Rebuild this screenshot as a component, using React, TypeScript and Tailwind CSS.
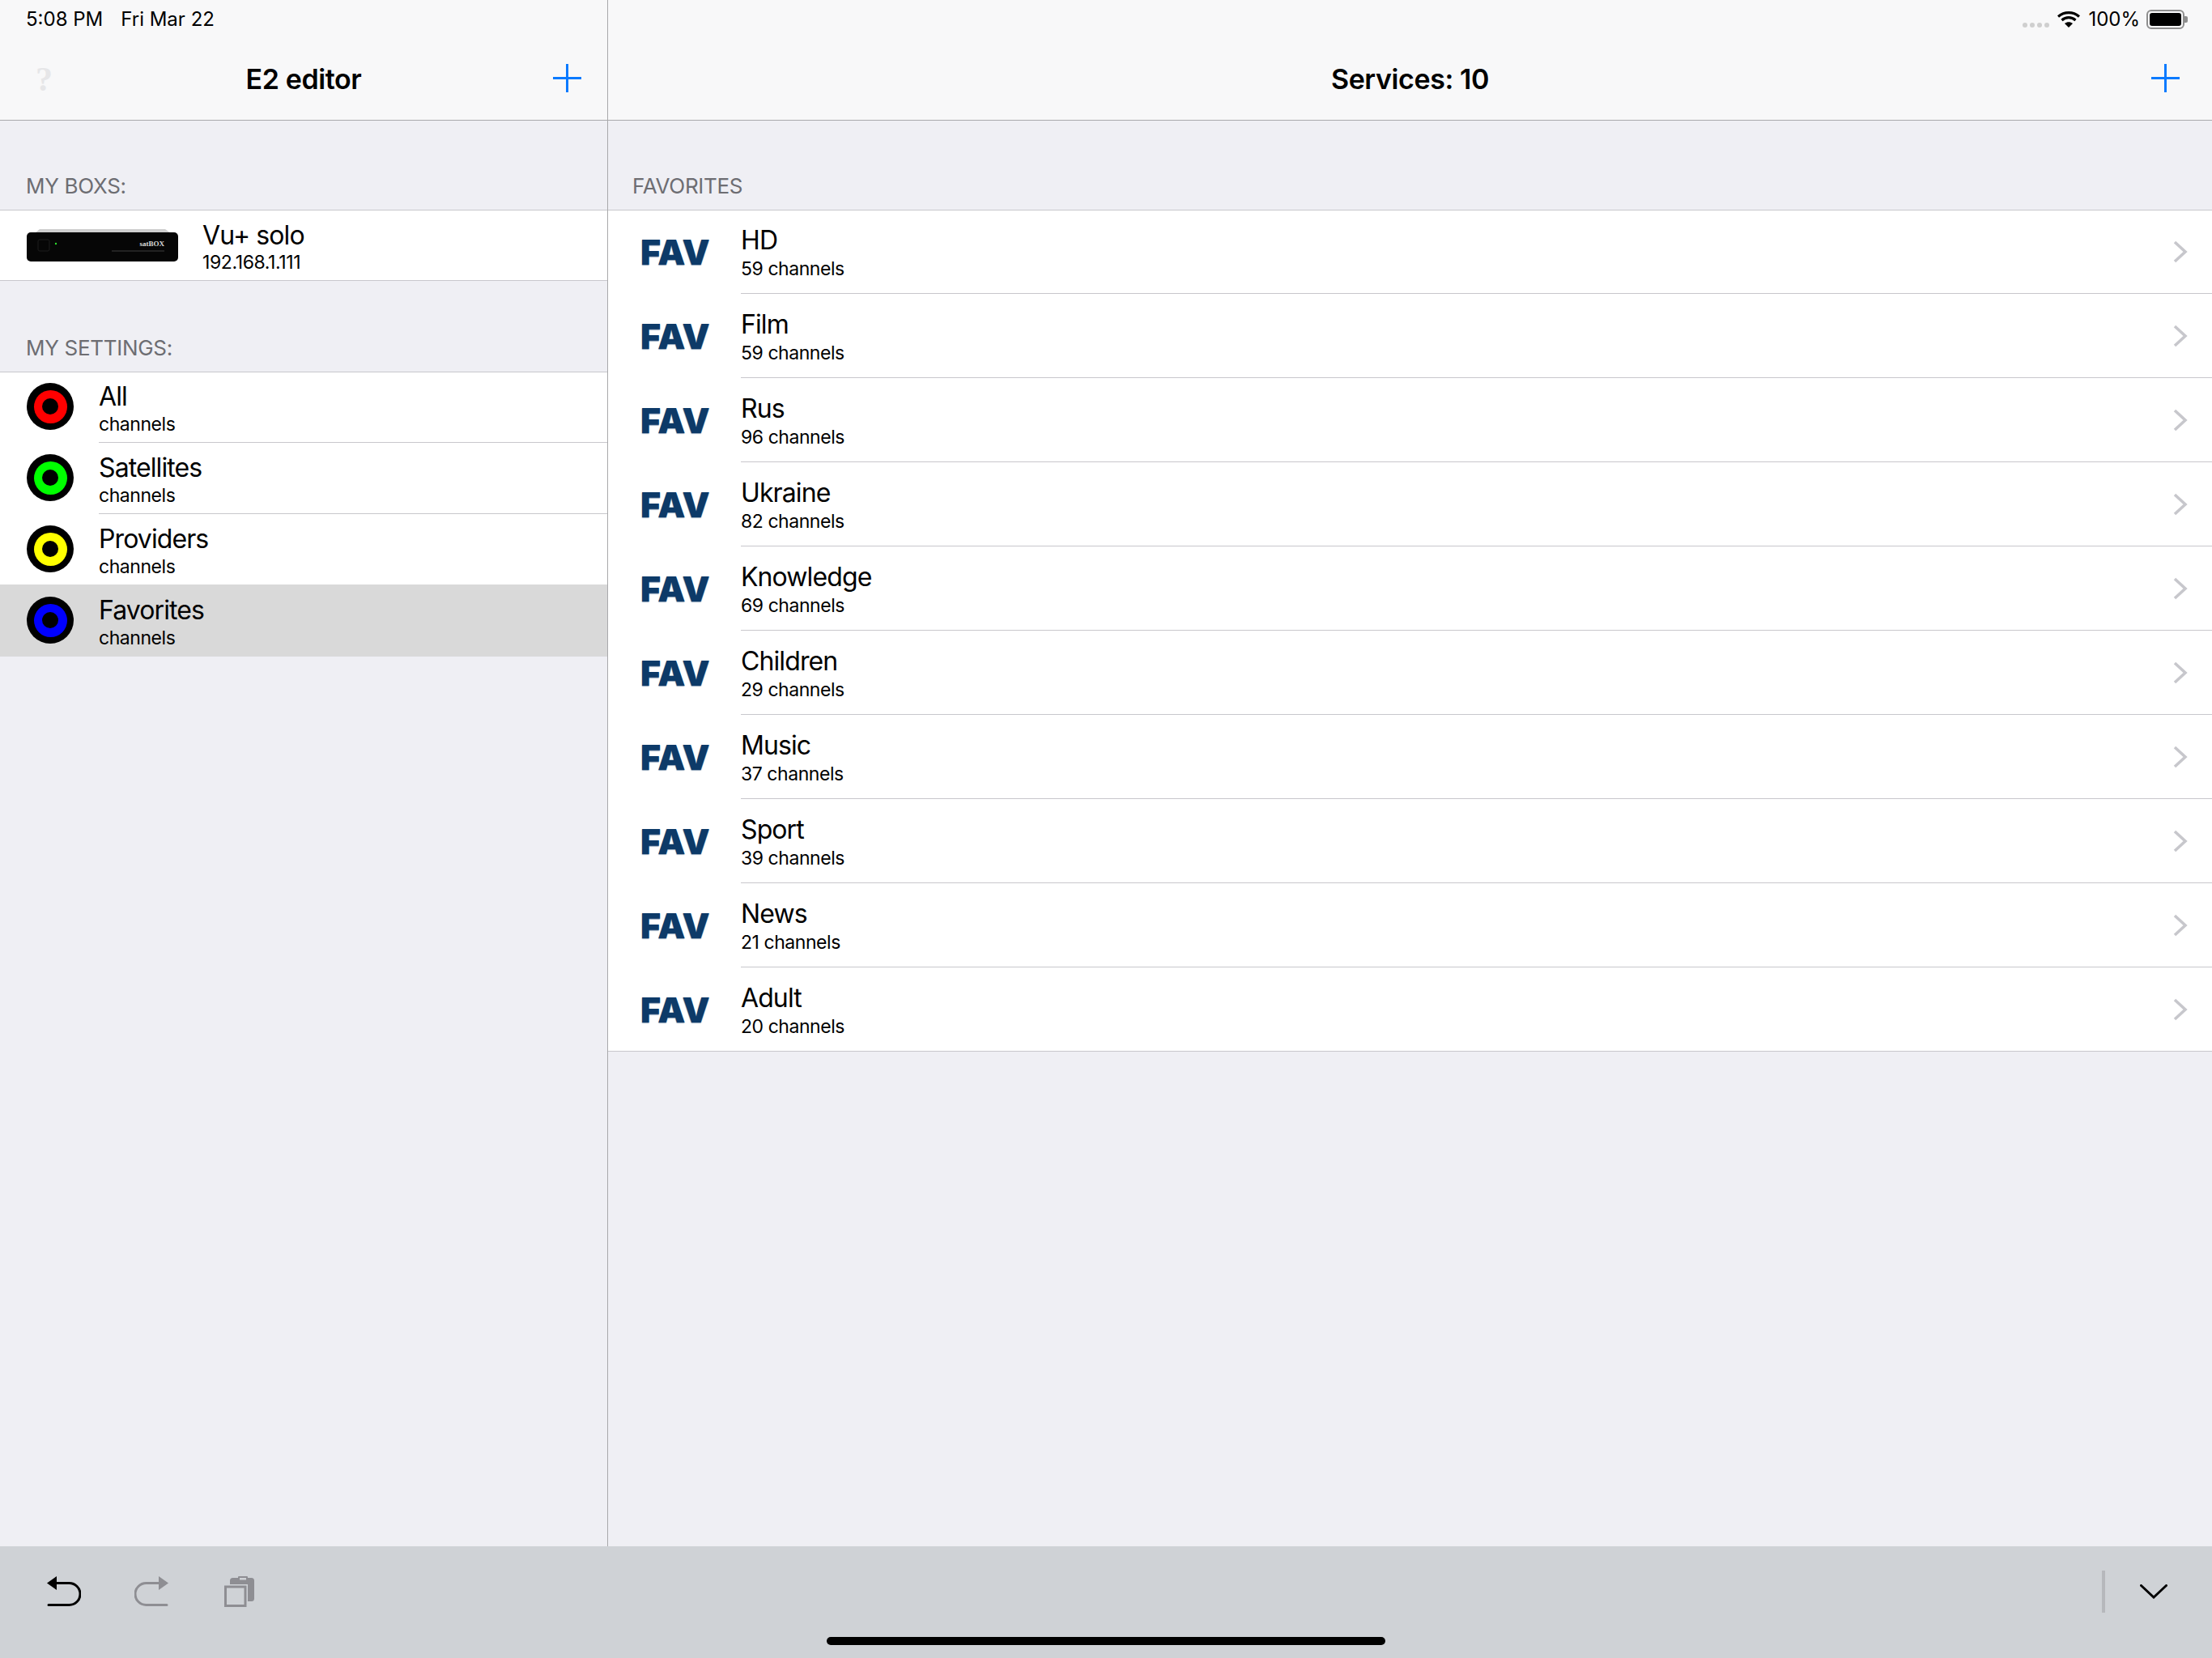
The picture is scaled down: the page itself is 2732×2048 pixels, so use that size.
const font = { fontFamily: "Inter, 'Noto Sans', sans-serif" };

const settings = [
  { name: "All", ring: "bg-[#ff0000]" },
  { name: "Satellites", ring: "bg-[#00ff00]" },
  { name: "Providers", ring: "bg-[#ffff00]" },
  { name: "Favorites", ring: "bg-[#0000ff]", active: true },
];

const favorites = [
  { name: "HD", count: 59 },
  { name: "Film", count: 59 },
  { name: "Rus", count: 96 },
  { name: "Ukraine", count: 82 },
  { name: "Knowledge", count: 69 },
  { name: "Children", count: 29 },
  { name: "Music", count: 37 },
  { name: "Sport", count: 39 },
  { name: "News", count: 21 },
  { name: "Adult", count: 20 },
];

function Plus() {
  return (
    <svg width="35" height="35" viewBox="0 0 35 35" className="mb-[3px] shrink-0">
      <path d="M17.5 0V35M0 17.5H35" stroke="#0a7aff" strokeWidth="3" />
    </svg>
  );
}

function Wifi() {
  return (
    <svg width="28" height="20" viewBox="0 0 28 20">
      <path d="M1 6.5C8.5 0 19.5 0 27 6.5" fill="none" stroke="#000" strokeWidth="3.2" />
      <path d="M5.5 11C10.5 6.6 17.5 6.6 22.5 11" fill="none" stroke="#000" strokeWidth="3.2" />
      <path d="M9 15C12 12.6 16 12.6 19 15L14 20Z" fill="#000" />
    </svg>
  );
}

function Battery() {
  return (
    <div className="flex items-center">
      <div className="w-[47px] h-[24px] rounded-[6px] border-2 border-[#8e8e8e] p-[2px]">
        <div className="w-full h-full rounded-[3px] bg-black" />
      </div>
      <div className="w-[4px] h-[8px] rounded-r-[2px] bg-[#8e8e8e]" />
    </div>
  );
}

function Header({ title, left, status }: { title: string; left?: React.ReactNode; status: React.ReactNode }) {
  return (
    <div className="h-[149px] bg-[#f8f8f9] border-b border-[#a9a9ab] flex flex-col shrink-0">
      <div className="h-[48px] flex items-center text-[24px] text-black">{status}</div>
      <div className="h-[100px] flex items-center">
        <div className="w-[150px] pl-[44px]">{left}</div>
        <div className="flex-1 text-center text-[34px] font-semibold text-black tracking-[-0.4px] pb-[2px]">{title}</div>
        <div className="w-[150px] flex justify-end pr-[var(--pr)]">
          <Plus />
        </div>
      </div>
    </div>
  );
}

function SatBox() {
  return (
    <svg width="187" height="40" viewBox="0 0 187 40" className="shrink-0">
      <path d="M10 5L16 0H171L178 5Z" fill="#cfcfcf" />
      <rect x="0" y="4" width="187" height="36" rx="5" fill="#060606" />
      <rect x="14" y="13" width="14" height="14" rx="2" fill="none" stroke="#1c1c1c" />
      <circle cx="36" cy="18" r="1.2" fill="#2ee02e" />
      <text x="170" y="21" textAnchor="end" fill="#d8d8d8" fontSize="9" fontWeight="700" fontFamily="'Liberation Serif', serif">satBOX</text>
      <rect x="105" y="26" width="65" height="2" fill="#222" />
    </svg>
  );
}

function Target({ ring }: { ring: string }) {
  return (
    <div className="w-[58px] h-[58px] rounded-full bg-black flex items-center justify-center shrink-0 mb-[2px]">
      <div className={`w-[41px] h-[41px] rounded-full ${ring} flex items-center justify-center`}>
        <div className="w-[20px] h-[20px] rounded-full bg-black" />
      </div>
    </div>
  );
}

function Chevron() {
  return (
    <svg width="18" height="28" viewBox="0 0 18 28" className="shrink-0">
      <path d="M2 2L15 14L2 26" fill="none" stroke="#c7c7cc" strokeWidth="3.6" />
    </svg>
  );
}

function SectionLabel({ children, className }: { children: string; className: string }) {
  return (
    <div className={`flex items-end text-[26px] leading-[32px] tracking-[-0.3px] text-[#6d6d72] ${className}`}>{children}</div>
  );
}

function Undo({ color, flip }: { color: string; flip?: boolean }) {
  return (
    <svg width="42" height="38" viewBox="0 0 42 38" className={flip ? "-scale-x-100" : ""}>
      <path d="M0 8.5L12 0V17Z" fill={color} />
      <path d="M10 8.5H27.5a13.5 13.5 0 0 1 0 27H2" fill="none" stroke={color} strokeWidth="3" strokeLinecap="round" />
    </svg>
  );
}

function Clipboard() {
  return (
    <svg width="37" height="38" viewBox="0 0 37 38">
      <rect x="7" y="2" width="30" height="29" rx="3.5" fill="#8e8e93" />
      <rect x="17" y="0" width="12" height="6" rx="1" fill="#8e8e93" />
      <rect x="19" y="2" width="8" height="2.5" fill="#cfd2d6" />
      <rect x="0" y="10" width="29" height="28" fill="#cfd2d6" />
      <rect x="1.5" y="13" width="24.5" height="23.5" fill="#cfd2d6" stroke="#8e8e93" strokeWidth="3" />
    </svg>
  );
}

export default function App() {
  return (
    <div className="w-[2732px] h-[2048px] flex flex-col bg-[#efeff4] overflow-hidden antialiased relative" style={font}>
      <div className="flex flex-1 min-h-0">
        {/* Master */}
        <div className="w-[751px] border-r border-[#a9a9ab] flex flex-col shrink-0 [--pr:32px]">
          <Header
            title="E2 editor"
            left={<span className="text-[42px] leading-none font-bold text-[#e6e6e8]" style={{ fontFamily: "'Liberation Serif', serif" }}>?</span>}
            status={
              <div className="pl-[32px] flex gap-[22px]">
                <span>5:08 PM</span>
                <span>Fri Mar 22</span>
              </div>
            }
          />
          <SectionLabel className="h-[110px] pl-[32px] pb-[13px]">MY BOXS:</SectionLabel>
          <div className="border-y border-[#c8c7cc] bg-white h-[88px] flex items-center pl-[33px]">
            <SatBox />
            <div className="ml-[30px] mt-[3px] flex flex-col">
              <div className="text-[32px] leading-[38px] tracking-[-0.9px] text-black">Vu+ solo</div>
              <div className="text-[23px] leading-[28px] tracking-[-0.4px] text-black">192.168.1.111</div>
            </div>
          </div>
          <SectionLabel className="h-[112px] pl-[32px] pb-[13px]">MY SETTINGS:</SectionLabel>
          <div className="border-t border-[#c8c7cc] bg-white">
            {settings.map((s, i) => (
              <div
                key={s.name}
                className={`h-[88px] flex items-center pl-[33px] ${i === 0 ? "-mt-px" : ""} ${s.active ? "bg-[#d9d9d9] shadow-[0_-1px_0_#d9d9d9]" : ""}`}
              >
                <Target ring={s.ring} />
                <div className={`ml-[31px] flex-1 h-full pt-[2px] flex flex-col justify-center ${i < 2 ? "border-b border-[#c8c7cc]" : ""} ${i === 2 ? "border-b border-transparent" : ""}`}>
                  <div className="text-[32px] leading-[40px] tracking-[-0.9px] text-black">{s.name}</div>
                  <div className="text-[23px] leading-[28px] tracking-[-0.45px] text-black">channels</div>
                </div>
              </div>
            ))}
          </div>
        </div>

        {/* Detail */}
        <div className="flex-1 flex flex-col min-w-0 [--pr:40px]">
          <Header
            title="Services: 10"
            status={
              <div className="flex-1 flex items-center justify-end pr-[30px]">
                <div className="flex gap-[3px] mt-[14px] mr-[10px]">
                  <span className="w-[6px] h-[6px] rounded-full bg-[#cfcfcf]" />
                  <span className="w-[6px] h-[6px] rounded-full bg-[#cfcfcf]" />
                  <span className="w-[6px] h-[6px] rounded-full bg-[#cfcfcf]" />
                  <span className="w-[6px] h-[6px] rounded-full bg-[#cfcfcf]" />
                </div>
                <Wifi />
                <span className="ml-[10px] mr-[8px]">100%</span>
                <Battery />
              </div>
            }
          />
          <SectionLabel className="h-[110px] pl-[30px] pb-[13px]">FAVORITES</SectionLabel>
          <div className="border-t border-[#c8c7cc] bg-white">
            {favorites.map((f, i) => (
              <div key={f.name} className={`h-[104px] flex items-center ${i === 0 ? "-mt-px" : ""}`}>
                <div className="w-[164px] pl-[40px] shrink-0">
                  <span
                    className="text-[43px] leading-none font-black text-[#0d3a68]"
                    style={{ textShadow: "0 1px 1px #8fa3b8" }}
                  >
                    FAV
                  </span>
                </div>
                <div className="flex-1 h-full flex items-center pr-[30px] border-b border-[#c8c7cc]">
                  <div className="flex-1 pt-[2px] flex flex-col">
                    <div className="text-[32px] leading-[40px] tracking-[-0.9px] text-black">{f.name}</div>
                    <div className="text-[23px] leading-[30px] tracking-[-0.45px] text-black">{f.count} channels</div>
                  </div>
                  <Chevron />
                </div>
              </div>
            ))}
            <div className="h-px bg-[#c8c7cc] -mt-px" />
          </div>
        </div>
      </div>

      {/* Toolbar */}
      <div className="h-[138px] shrink-0 bg-[#cfd2d6]">
        <div className="h-[112px] flex items-center pl-[58px] pr-[55px]">
          <Undo color="#000" />
          <div className="ml-[66px]">
            <Undo color="#8e8e93" flip />
          </div>
          <div className="ml-[69px]">
            <Clipboard />
          </div>
          <div className="flex-1" />
          <div className="w-[4px] h-[52px] bg-[#b6b8bc]" />
          <svg width="34" height="18" viewBox="0 0 34 18" className="ml-[43px]">
            <path d="M1.5 1.5L17 16L32.5 1.5" fill="none" stroke="#000" strokeWidth="3" strokeLinecap="round" />
          </svg>
        </div>
      </div>
      <div className="absolute bottom-[16px] left-[1021px] w-[690px] h-[10px] rounded-full bg-black" />
    </div>
  );
}
